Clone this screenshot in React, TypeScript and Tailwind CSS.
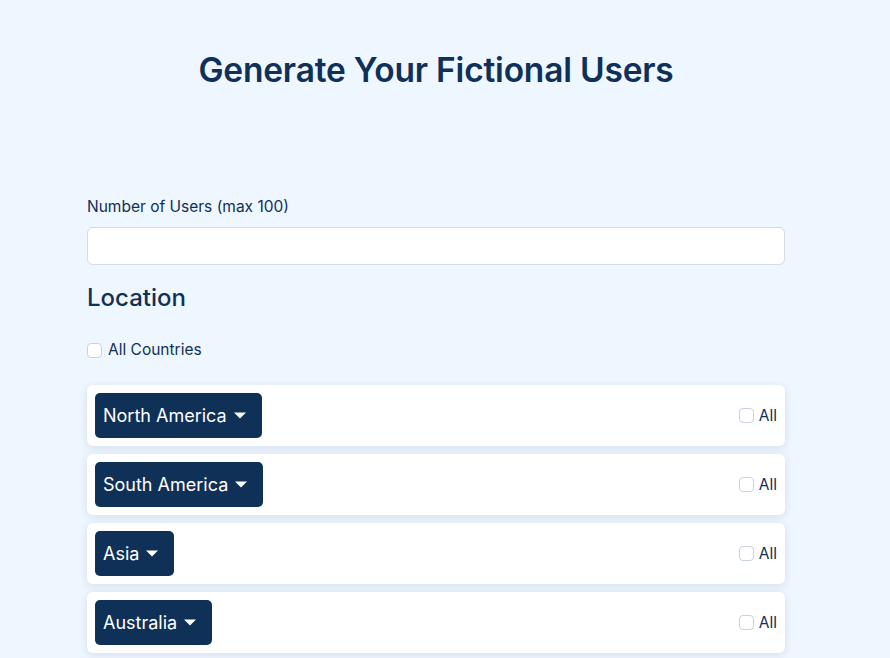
import React from 'react';

const regions = ['North America', 'South America', 'Asia', 'Australia'];

function Caret() {
  return (
    <svg width="12" height="7" viewBox="0 0 12 7" className="ml-[7px]">
      <path d="M0 0.5 L12 0.5 L6 6.5 Z" fill="white" />
    </svg>
  );
}

export default function App() {
  return (
    <div className="min-h-screen bg-[#eef6ff] text-[#0f3057] font-['Inter',sans-serif]">
      <div className="pl-[87px] pr-[105px]">
        <h1 className="pt-[46px] text-center text-[33.5px] font-semibold leading-[48px] tracking-[-0.2px]">
          Generate Your Fictional Users
        </h1>

        <div className="mt-[102px]">
          <label className="block text-[15.5px] leading-[22px]">Number of Users (max 100)</label>
          <input
            type="text"
            className="mt-[9px] block h-[38px] w-full rounded-md border border-[#d3dbe5] bg-white px-3 outline-none"
          />
        </div>

        <h2 className="mt-[18px] text-[24px] font-medium leading-[30px]">Location</h2>

        <label className="mt-[27px] flex items-center gap-[6px] text-[15.5px] leading-[20px]">
          <span className="h-[15px] w-[15px] rounded-[4px] border border-[#c9d3df] bg-white" />
          All Countries
        </label>

        <div className="mt-[25px] flex flex-col gap-2">
          {regions.map((r) => (
            <div
              key={r}
              className="flex items-center justify-between rounded-md bg-white p-2 shadow-[0_2px_8px_rgba(30,60,110,0.12)]"
            >
              <button className="flex h-[45px] items-center rounded-[5px] bg-[#0f3057] pl-2 pr-4 text-[18px] text-white">
                {r}
                <Caret />
              </button>
              <label className="flex items-center gap-[5px] text-[15.5px]">
                <span className="h-[15px] w-[15px] rounded-[4px] border border-[#c9d3df] bg-white" />
                All
              </label>
            </div>
          ))}
        </div>
      </div>
    </div>
  );
}
